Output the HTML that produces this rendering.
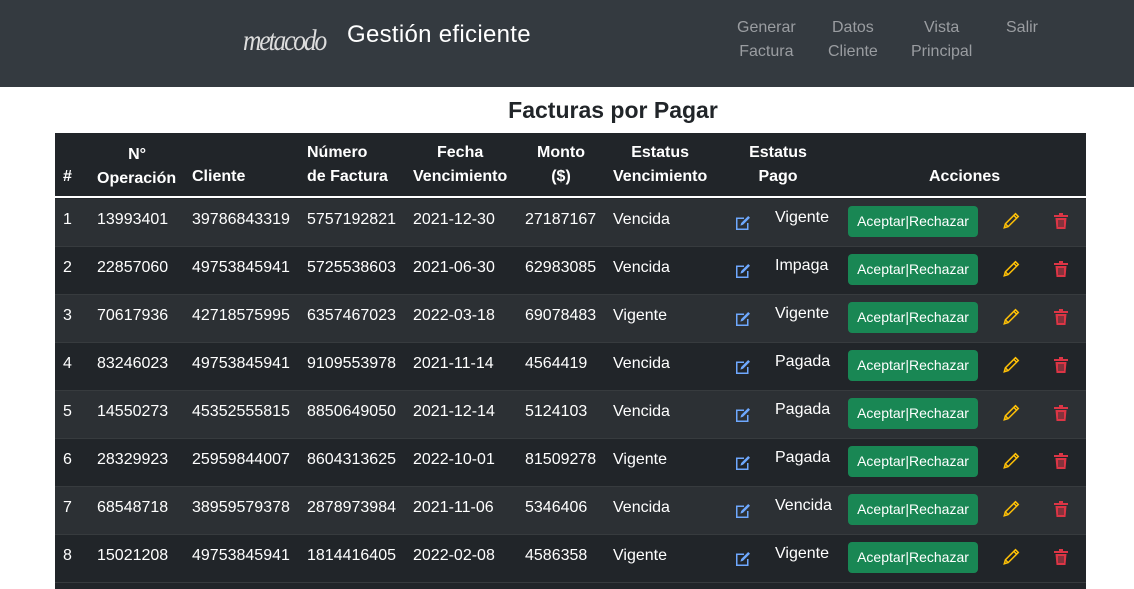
<!DOCTYPE html>
<html><head><meta charset="utf-8"><style>
*{margin:0;padding:0;box-sizing:border-box}
body{width:1134px;height:589px;overflow:hidden;background:#fff;font-family:"Liberation Sans",sans-serif;font-size:16px;color:#fff;position:relative}
.nav{position:absolute;left:0;top:0;width:1134px;height:87px;background:#343a40}
.logo{position:absolute;left:243px;top:24px;font-family:"Liberation Serif",serif;font-style:italic;font-size:30px;color:#ddd;letter-spacing:-2.5px;transform:scaleX(0.85);transform-origin:left}
.brand{position:absolute;left:347px;top:21px;font-size:24px;color:#fff;letter-spacing:0.3px}
.nl{position:absolute;top:16px;color:#9a9da1;font-size:16px;line-height:24px;text-align:center}
h1{position:absolute;left:0;width:1226px;top:97px;text-align:center;font-size:23px;font-weight:bold;color:#212529}
.tbl{position:absolute;left:55px;top:133px;width:1031px;height:456px;background:#212529}
.hd{position:absolute;left:0;top:0;width:1031px;height:65px;border-bottom:2px solid #fff}
.hd span{position:absolute;font-weight:bold;line-height:24px;text-align:center}
.row{position:absolute;left:0;width:1031px;height:48px;border-bottom:1px solid #373b3e}
.row span{position:absolute;top:11px}
.odd{background:#2c3034}
.btn{position:absolute;left:793px;top:7px;width:130px;height:31px;background:#198754;border-radius:4px;font-size:14px;line-height:31px;text-align:center;color:#fff}
svg{position:absolute}
</style></head><body>
<div class="nav">
<div class="logo">metacodo</div>
<div class="brand">Gestión eficiente</div>
<div class="nl" style="left:737px">Generar<br>Factura</div>
<div class="nl" style="left:828px">Datos<br>Cliente</div>
<div class="nl" style="left:911px">Vista<br>Principal</div>
<div class="nl" style="left:1006px">Salir</div>
</div>
<h1>Facturas por Pagar</h1>
<div class="tbl">
<div class="hd">
<span style="left:8px;top:32px">#</span>
<span style="left:42px;top:10px;text-align:left">&nbsp;&nbsp;&nbsp;&nbsp;&nbsp;&nbsp;&nbsp;N°<br>Operación</span>
<span style="left:137px;top:32px">Cliente</span>
<span style="left:252px;top:8px;text-align:left">Número<br>de Factura</span>
<span style="left:358px;top:8px">Fecha<br>Vencimiento</span>
<span style="left:470px;top:8px;width:72px">Monto<br>($)</span>
<span style="left:558px;top:8px">Estatus<br>Vencimiento</span>
<span style="left:690px;top:8px;width:66px">Estatus<br>Pago</span>
<span style="left:874px;top:32px">Acciones</span>
</div>
<div id="rows"></div>
</div>
<script>
var d=[["1","13993401","39786843319","5757192821","2021-12-30","27187167","Vencida","Vigente"],
["2","22857060","49753845941","5725538603","2021-06-30","62983085","Vencida","Impaga"],
["3","70617936","42718575995","6357467023","2022-03-18","69078483","Vigente","Vigente"],
["4","83246023","49753845941","9109553978","2021-11-14","4564419","Vencida","Pagada"],
["5","14550273","45352555815","8850649050","2021-12-14","5124103","Vencida","Pagada"],
["6","28329923","25959844007","8604313625","2022-10-01","81509278","Vigente","Pagada"],
["7","68548718","38959579378","2878973984","2021-11-06","5346406","Vencida","Vencida"],
["8","15021208","49753845941","1814416405","2022-02-08","4586358","Vigente","Vigente"]];
var xs=[8,42,137,252,358,470,558,720],h="";
d.forEach(function(r,i){
h+='<div class="row'+(i%2==0?' odd':'')+'" style="top:'+(66+i*48)+'px">';
r.forEach(function(c,j){h+='<span style="left:'+xs[j]+'px;top:'+(j==7?10:12)+'px">'+c+'</span>';});
h+='<svg style="left:680px;top:16px" width="16" height="16" viewBox="0 0 16 16"><path d="M1 2.5h8V4H2.5v9.5H12V8h1.5v7H1z" fill="#6ea8fe"/><path d="M13.2 1l1.8 1.8-7 7-2.6.8.8-2.6z" fill="#6ea8fe"/></svg>';
h+='<div class="btn">Aceptar|Rechazar</div>';
h+='<svg style="left:947px;top:13px" width="18" height="18" viewBox="0 0 16 16"><path d="M12 1.5l2.5 2.5-9 9-3.5 1 1-3.5z M10.5 3l2.5 2.5 M3.5 11l1.5 1.5" fill="none" stroke="#ffc107" stroke-width="1.3"/></svg>';
h+='<svg style="left:999px;top:14px" width="14" height="16" viewBox="0 0 14 16"><rect x="0" y="2" width="14" height="2" fill="#dc3545"/><rect x="5" y="0" width="4" height="2" fill="#dc3545"/><path d="M1.5 5h11l-1 11h-9z" fill="#dc3545"/><path d="M5 7v7M7 7v7M9 7v7" stroke="#2c3034" stroke-width="1"/></svg>';
h+='</div>';});
document.getElementById('rows').innerHTML=h;
</script>
</body></html>
